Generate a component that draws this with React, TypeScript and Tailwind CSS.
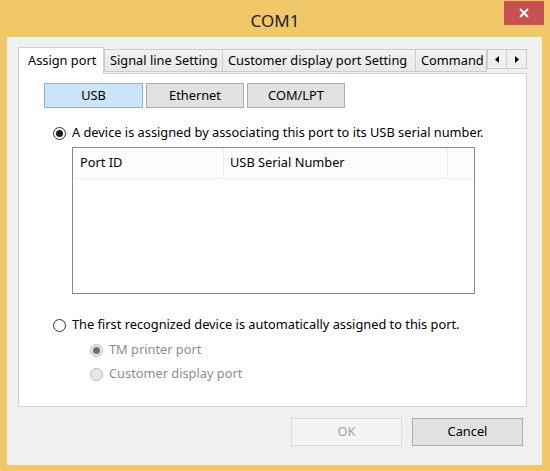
const font = { fontFamily: '"Segoe UI", "Noto Sans", "Open Sans", sans-serif' };

function Radio({ checked, disabled, label }: { checked?: boolean; disabled?: boolean; label: string }) {
	return (
		<div className="flex h-4 items-center">
			<span
				className={
					'flex h-[13px] w-[13px] items-center justify-center rounded-full border ' +
					(disabled ? 'border-[#bcbcbc] bg-[#e6e6e6]' : 'border-[#333333] bg-white')
				}>
				{checked && (
					<span className={'h-[7px] w-[7px] rounded-full ' + (disabled ? 'bg-[#707070]' : 'bg-[#1a1a1a]')} />
				)}
			</span>
			<span className={'ml-[6px] ' + (disabled ? 'text-[#8d8d8d]' : 'text-black')}>{label}</span>
		</div>
	);
}

function Tab({ label, w, selected }: { label: string; w: string; selected?: boolean }) {
	if (selected) {
		return (
			<div
				className={`${w} relative z-10 -mb-px flex h-[27px] items-start border border-b-0 border-[#d0d0d0] bg-white pl-[9px] pt-[3px]`}>
				{label}
			</div>
		);
	}
	return (
		<div
			className={`${w} -ml-px flex h-[23px] items-center overflow-hidden whitespace-nowrap border border-[#cccccc] bg-gradient-to-b from-[#f2f2f2] to-[#e8e8e8] pl-[5px] first:ml-0`}>
			{label}
		</div>
	);
}

export default function App() {
	return (
		<div className="flex h-[471px] w-[550px] flex-col bg-[#f0c869] text-[12.8px] text-black" style={font}>
			<div className="relative flex h-[37px] shrink-0 items-center justify-center pt-[4px]">
				<span className="text-[17px] text-[#222222]">COM1</span>
				<div className="absolute right-[6px] top-[1px] flex h-[24px] w-[40px] items-center justify-center bg-[#c75050]">
					<svg width="10" height="10" viewBox="0 0 10 10">
						<path d="M1 1L9 9M9 1L1 9" stroke="white" strokeWidth="2" />
					</svg>
				</div>
			</div>
			<div className="ml-[7px] mr-[8px] mb-[6px] flex flex-1 flex-col bg-[#f0f0f0]">
				<div className="flex flex-col pl-[11px] pr-[15px] pt-[10px]">
					<div className="flex items-end">
						<Tab label="Assign port" w="w-[88px]" selected />
						<div className="mb-px flex items-end">
							<Tab label="Signal line Setting" w="w-[119px]" />
							<Tab label="Customer display port Setting" w="w-[194px]" />
							<Tab label="Command Interface" w="w-[72px]" />
						</div>
						<div className="mb-[4px] flex">
							<div className="flex h-[20px] w-[20px] items-center justify-center border border-[#cccccc] bg-[#f0f0f0]">
								<svg width="4" height="7" viewBox="0 0 4 7">
									<path d="M4 0L0 3.5L4 7Z" fill="black" />
								</svg>
							</div>
							<div className="-ml-px flex h-[20px] w-[21px] items-center justify-center border border-[#cccccc] bg-[#f0f0f0]">
								<svg width="4" height="7" viewBox="0 0 4 7">
									<path d="M0 0L4 3.5L0 7Z" fill="black" />
								</svg>
							</div>
						</div>
					</div>
					<div className="flex h-[334px] flex-col border border-[#d0d0d0] bg-white">
						<div className="ml-[25px] mt-[9px] flex gap-[3px]">
							<div className="flex h-[25px] w-[99px] items-center justify-center border border-[#7eb4ea] bg-[#cce4f7]">
								USB
							</div>
							<div className="flex h-[25px] w-[98px] items-center justify-center border border-[#adadad] bg-[#e1e1e1]">
								Ethernet
							</div>
							<div className="flex h-[25px] w-[98px] items-center justify-center border border-[#adadad] bg-[#e1e1e1]">
								COM/LPT
							</div>
						</div>
						<div className="ml-[34px] mt-[17px]">
							<Radio checked label="A device is assigned by associating this port to its USB serial number." />
						</div>
						<div className="ml-[53px] mt-[6px] flex h-[147px] w-[403px] flex-col border border-[#828790] bg-white">
							<div className="flex h-[31px] border-b border-[#eef3f9] bg-[#fcfcfc]">
								<div className="flex w-[151px] items-center border-r border-[#e8eef6] pl-[7px]">Port ID</div>
								<div className="flex w-[224px] items-center border-r border-[#e8eef6] pl-[6px]">
									USB Serial Number
								</div>
							</div>
						</div>
						<div className="ml-[34px] mt-[23px]">
							<Radio label="The first recognized device is automatically assigned to this port." />
						</div>
						<div className="ml-[71px] mt-[9px]">
							<Radio checked disabled label="TM printer port" />
						</div>
						<div className="ml-[71px] mt-[8px]">
							<Radio disabled label="Customer display port" />
						</div>
					</div>
				</div>
				<div className="mt-[11px] flex justify-end gap-[10px] pr-[19px]">
					<div className="flex h-[28px] w-[111px] items-center justify-center border border-[#dadada] bg-[#f4f4f4] text-[#a3a3a3]">
						OK
					</div>
					<div className="flex h-[28px] w-[111px] items-center justify-center border border-[#adadad] bg-[#e1e1e1]">
						Cancel
					</div>
				</div>
			</div>
		</div>
	);
}
